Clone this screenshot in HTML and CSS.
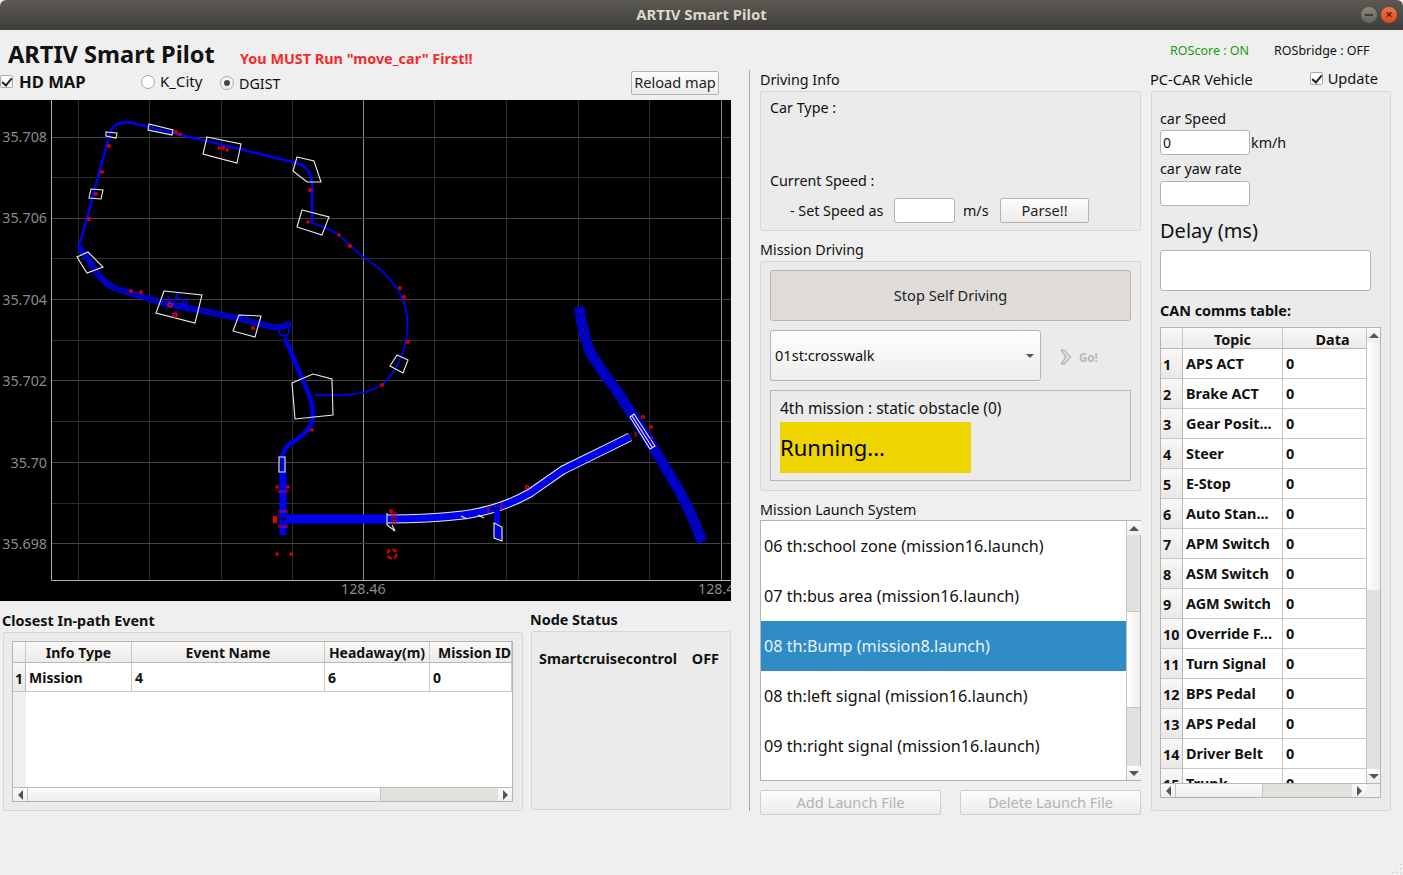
FILE: index.html
```html
<!DOCTYPE html>
<html lang="en">
<head>
  <meta charset="UTF-8">
  <meta name="viewport" content="width=device-width, initial-scale=1.0">
  <title>ARTIV Smart Pilot</title>
  <link rel="stylesheet" href="styles.css">
</head>
<body>
  <div class="titlebar">
    <span class="titlebar-text">ARTIV Smart Pilot</span>
    <div class="win-buttons">
      <span class="win-btn win-min"></span>
      <span class="win-btn win-close">&#215;</span>
    </div>
  </div>

  <div class="topbar">
    <h1>ARTIV Smart Pilot</h1>
    <span class="warning">You MUST Run "move_car" First!!</span>
    <span class="ros ros-core">ROScore : ON</span>
    <span class="ros ros-bridge">ROSbridge : OFF</span>
  </div>

  <div class="main">
    <div class="left">
      <div class="map-options">
        <span class="check checked"></span>
        <span class="hd-map">HD MAP</span>
        <span class="radio"></span>
        <span class="radio-label kcity">K_City</span>
        <span class="radio on"></span>
        <span class="radio-label dgist">DGIST</span>
        <button class="btn reload">Reload map</button>
      </div>

      <svg class="map" viewBox="0 100 731 501" width="731" height="501">
        <defs>
          <path id="east-road" d="M579 307 Q582 330 590 352 Q602 372 617 391 L647 437 L677 487 Q693 515 702 542"/>
          <path id="south-road" d="M79 247 Q85 255 97 273 Q105 285 117 289 L160 302 L237 318 L272 327 Q283 328 291 323"/>
          <path id="mid-road" d="M285 338 L310 397 Q315 410 311 425 Q305 435 290 444 Q282 450 282 460 L283 472"/>
        </defs>

        <rect class="map-bg" x="0" y="100" width="731" height="501"/>

        <g class="grid">
          <path d="M78.5 100V580 M149.5 100V580 M221.5 100V580 M292.5 100V580 M434.5 100V580 M506.5 100V580 M578.5 100V580 M649.5 100V580"/>
          <path d="M51 177.5H731 M51 258.5H731 M51 340.5H731 M51 421.5H731 M51 503.5H731"/>
        </g>
        <g class="grid-major">
          <path d="M363.5 100V580 M721.5 100V580"/>
          <path d="M51 137.5H731 M51 218.5H731 M51 299.5H731 M51 380.5H731 M51 462.5H731 M51 543.5H731"/>
        </g>
        <path class="axis" d="M51.5 100V580.5H731"/>

        <g class="axis-y">
          <text x="47" y="142">35.708</text>
          <text x="47" y="223">35.706</text>
          <text x="47" y="305">35.704</text>
          <text x="47" y="386">35.702</text>
          <text x="47" y="468">35.70</text>
          <text x="47" y="549">35.698</text>
        </g>
        <text class="axis-x" x="341" y="594">128.46</text>
        <text class="axis-x" x="698" y="594">128.4</text>

        <!-- road lines -->
        <path class="road r3" d="M79 247 L110 133 Q114 122 128 122 L293 162 Q312 166 312 185 L312 223"/>
        <path class="road r2" d="M312 223 Q325 226 339 235 L363 257 Q385 270 398 290 Q410 310 407 335 Q403 365 382 385 Q365 395 340 395 L315 395"/>
        <use href="#south-road" class="road w6"/>
        <use href="#south-road" class="road-dark w4"/>
        <use href="#south-road" class="road w3"/>
        <use href="#south-road" class="road-dark w1"/>
        <use href="#mid-road" class="road w5"/>
        <use href="#mid-road" class="road-dark w4"/>
        <use href="#mid-road" class="road w3"/>
        <use href="#east-road" class="road w11"/>
        <use href="#east-road" class="road-dark w9"/>
        <use href="#east-road" class="road w8"/>
        <use href="#east-road" class="road-dark w6"/>
        <use href="#east-road" class="road w5"/>
        <use href="#east-road" class="road-dark w3"/>
        <use href="#east-road" class="road w2"/>
        <circle class="road r2" cx="284" cy="331" r="5"/>
        <circle class="road r2" cx="178" cy="303" r="5"/>
        <path class="road r2" d="M168 296 Q172 304 166 310 M188 298 Q184 306 188 312 M176 298 L178 293 M176 310 L176 316"/>
        <path class="road r7" d="M283 472V535"/>
        <path class="road r9" d="M283 519H387"/>
        <path class="road-edge" d="M387 519 Q430 519 463 515 Q500 510 530 493 L563 470 L630 437"/>
        <path class="road r7" d="M387 519 Q430 519 463 515 Q500 510 530 493 L563 470 L630 437"/>
        <path class="road r6" d="M497 510V525"/>
        <path class="gap" d="M281 519H286 M392 519H396 M491 508H499"/>

        <!-- map zones -->
        <g class="zones">
          <polygon points="106,132 117,133 116,138 106,136"/>
          <polygon points="149,124 173,130 172,135 148,130"/>
          <polygon points="207,137 241,144 237,163 203,154"/>
          <polygon points="297,157 314,161 321,182 307,182 293,171"/>
          <polygon points="302,210 329,217 322,235 297,227"/>
          <polygon points="91,189 103,190 101,199 89,198"/>
          <polygon points="77,257 88,252 103,267 87,273"/>
          <polygon points="164,291 202,295 195,323 156,313"/>
          <polygon points="239,315 261,316 255,337 233,331"/>
          <polygon points="292,383 313,374 332,379 333,415 295,419"/>
          <polygon points="397,355 408,360 403,373 390,366"/>
          <polygon points="279,457 285,457 285,472 279,472"/>
          <polygon class="zone-fill" points="494,523 502,527 502,541 494,538"/>
          <polygon class="zone-fill" points="630,417 634,414 655,446 650,449"/>
          <path d="M632 416 L652 447"/>
          <polyline points="387,513 387,525 395,531 392,525"/>
          <path d="M461 516 L467 519 M478 515 L484 518"/>
        </g>

        <!-- event markers -->
        <g class="marks">
          <circle cx="109" cy="146" r="1.3"/><circle cx="102" cy="172" r="1.3"/>
          <circle cx="96" cy="194" r="1.3"/><circle cx="89" cy="219" r="1.3"/>
          <circle cx="176" cy="132" r="1.3"/><circle cx="180" cy="134" r="1"/>
          <circle cx="219" cy="148" r="1"/><circle cx="223" cy="148" r="1.3"/>
          <circle cx="227" cy="150" r="1"/><circle cx="310" cy="190" r="1.3"/>
          <circle cx="308" cy="222" r="1"/><circle cx="339" cy="235" r="1"/>
          <circle cx="350" cy="246" r="1.3"/><circle cx="400" cy="288" r="1.3"/>
          <circle cx="404" cy="297" r="1.3"/><circle cx="131" cy="291" r="1.3"/>
          <circle cx="141" cy="292" r="1.3"/><circle cx="170" cy="305" r="2"/>
          <circle cx="175" cy="315" r="2"/><circle cx="253" cy="328" r="1.3"/>
          <circle cx="408" cy="342" r="1.3"/><circle cx="382" cy="385" r="1.3"/>
          <circle cx="312" cy="430" r="1"/><circle cx="277" cy="487" r="1"/>
          <circle cx="288" cy="487" r="1"/><circle cx="277" cy="554" r="1"/>
          <circle cx="291" cy="554" r="1"/><circle cx="391" cy="511" r="1.3"/>
          <circle cx="527" cy="487" r="1.5"/><circle cx="643" cy="417" r="1.3"/>
          <circle cx="651" cy="427" r="1.3"/>
          <circle class="mark-ring" cx="392" cy="554" r="4.5"/>
          <rect class="mark-block" x="273" y="516" width="4" height="7"/>
          <path class="mark-tint" d="M278 490h10v3h-10z M278 510h10v3h-10z M278 525h10v3h-10z M391 512h6v12h-6z M487 506h3v7h-3z M500 503h3v7h-3z M634 432h3v5h-3z M650 436h3v4h-3z"/>
        </g>
      </svg>

      <div class="bottom-panels">
        <div class="closest">
          <div class="label-bold">Closest In-path Event</div>
          <div class="group closest-box">
            <div class="table-widget event-table">
              <div class="event-scroll">
                <table>
                  <thead>
                    <tr><th class="vh"></th><th class="ev-type">Info Type</th><th class="ev-name">Event Name</th><th class="ev-head">Headaway(m)</th><th class="ev-id">Mission ID</th></tr>
                  </thead>
                  <tbody>
                    <tr><td class="vh">1</td><td>Mission</td><td>4</td><td>6</td><td>0</td></tr>
                  </tbody>
                </table>
              </div>
              <div class="hbar">
                <span class="sb-btn"><i class="arr arr-left"></i></span>
                <span class="sb-thumb event-thumb"></span>
                <span class="sb-track"></span>
                <span class="sb-btn"><i class="arr arr-right"></i></span>
              </div>
            </div>
          </div>
        </div>
        <div class="node">
          <div class="label-bold">Node Status</div>
          <div class="group node-box">
            <span>Smartcruisecontrol</span>
            <span>OFF</span>
          </div>
        </div>
      </div>
    </div>

    <div class="mid">
      <div class="label">Driving Info</div>
      <div class="group info-box">
        <div class="car-type">Car Type :</div>
        <div class="cur-speed">Current Speed :</div>
        <div class="speed-row">
          <span class="set-speed">- Set Speed as</span>
          <input class="field speed-input" type="text">
          <span class="unit">m/s</span>
          <button class="btn parse">Parse!!</button>
        </div>
      </div>

      <div class="label">Mission Driving</div>
      <div class="group mission-box">
        <button class="btn stop">Stop Self Driving</button>
        <div class="combo-row">
          <div class="combo">01st:crosswalk<i class="arr arr-down combo-arrow"></i></div>
          <div class="go">
            <svg width="12" height="16" viewBox="0 0 12 16"><path d="M1 1 L4.5 1 L11 8 L4.5 15 L1 15 L5.5 8 Z" fill="#d8d8d8" stroke="#a8a8a8" stroke-width="1"/></svg>
            <span>Go!</span>
          </div>
        </div>
        <div class="status-box">
          <div class="status-text">4th mission : static obstacle (0)</div>
          <div class="running">Running...</div>
        </div>
      </div>

      <div class="label launch-label">Mission Launch System</div>
      <div class="launch-list">
        <ul>
          <li>06 th:school zone (mission16.launch)</li>
          <li>07 th:bus area (mission16.launch)</li>
          <li class="selected">08 th:Bump (mission8.launch)</li>
          <li>08 th:left signal (mission16.launch)</li>
          <li>09 th:right signal (mission16.launch)</li>
        </ul>
        <div class="vbar">
          <span class="sb-btn"><i class="arr arr-up"></i></span>
          <span class="sb-track launch-track-a"></span>
          <span class="sb-thumb launch-thumb"></span>
          <span class="sb-track"></span>
          <span class="sb-btn"><i class="arr arr-down"></i></span>
        </div>
      </div>
      <div class="launch-buttons">
        <button class="btn disabled">Add Launch File</button>
        <button class="btn disabled">Delete Launch File</button>
      </div>
    </div>

    <div class="right">
      <div class="right-head">
        <span>PC-CAR Vehicle</span>
        <span class="update"><span class="check checked"></span>Update</span>
      </div>
      <div class="group car-box">
        <div class="car-label">car Speed</div>
        <div class="speed-line">
          <input class="field car-input" type="text" value="0">
          <span>km/h</span>
        </div>
        <div class="car-label yaw-label">car yaw rate</div>
        <input class="field car-input" type="text">
        <div class="delay-label">Delay (ms)</div>
        <input class="field delay-input" type="text">
        <div class="can-label">CAN comms table:</div>

        <div class="table-widget can-table">
          <div class="can-top">
            <div class="can-scroll">
              <table>
                <thead>
                  <tr><th class="vh"></th><th class="can-topic">Topic</th><th class="can-data">Data</th></tr>
                </thead>
                <tbody>
                  <tr><td class="vh">1</td><td>APS ACT</td><td>0</td></tr>
                  <tr><td class="vh">2</td><td>Brake ACT</td><td>0</td></tr>
                  <tr><td class="vh">3</td><td>Gear Posit...</td><td>0</td></tr>
                  <tr><td class="vh">4</td><td>Steer</td><td>0</td></tr>
                  <tr><td class="vh">5</td><td>E-Stop</td><td>0</td></tr>
                  <tr><td class="vh">6</td><td>Auto Stan...</td><td>0</td></tr>
                  <tr><td class="vh">7</td><td>APM Switch</td><td>0</td></tr>
                  <tr><td class="vh">8</td><td>ASM Switch</td><td>0</td></tr>
                  <tr><td class="vh">9</td><td>AGM Switch</td><td>0</td></tr>
                  <tr><td class="vh">10</td><td>Override F...</td><td>0</td></tr>
                  <tr><td class="vh">11</td><td>Turn Signal</td><td>0</td></tr>
                  <tr><td class="vh">12</td><td>BPS Pedal</td><td>0</td></tr>
                  <tr><td class="vh">13</td><td>APS Pedal</td><td>0</td></tr>
                  <tr><td class="vh">14</td><td>Driver Belt</td><td>0</td></tr>
                  <tr><td class="vh">15</td><td>Trunk</td><td>0</td></tr>
                </tbody>
              </table>
            </div>
            <div class="vbar">
              <span class="sb-btn"><i class="arr arr-up"></i></span>
              <span class="sb-thumb can-vthumb"></span>
              <span class="sb-track"></span>
              <span class="sb-btn"><i class="arr arr-down"></i></span>
            </div>
          </div>
          <div class="hbar can-hbar">
            <span class="sb-btn"><i class="arr arr-left"></i></span>
            <span class="sb-thumb can-hthumb"></span>
            <span class="sb-track"></span>
            <span class="sb-btn"><i class="arr arr-right"></i></span>
            <span class="sb-corner"></span>
          </div>
        </div>
      </div>
    </div>
  </div>

  <svg class="grip" width="12" height="12" viewBox="0 0 12 12">
    <path d="M10 2h1v1h-1z M6 6h1v1H6z M10 6h1v1h-1z M2 10h1v1H2z M6 10h1v1H6z M10 10h1v1h-1z" fill="#c4c4c4"/>
  </svg>
</body>
</html>
```

FILE: styles.css
```css
* {
  box-sizing: border-box;
}
html, body {
  margin: 0;
  padding: 0;
}
body {
  position: relative;
  width: 1403px;
  height: 875px;
  overflow: hidden;
  background-color: #efefef;
  color: #111;
  font-family: "Noto Sans", "Open Sans", sans-serif;
  font-size: 14.3px;
}

/* window title */
.titlebar {
  display: flex;
  align-items: center;
  justify-content: center;
  position: relative;
  height: 30px;
  padding-bottom: 3px;
  background: linear-gradient(#5c5a52, #3e3d39);
  border-radius: 6px 6px 0 0;
}
.titlebar-text {
  color: #dcd8ce;
  font-weight: bold;
  font-size: 14.9px;
}
.win-buttons {
  position: absolute;
  right: 6px;
  top: 7px;
  display: flex;
  gap: 4px;
}
.win-btn {
  display: block;
  width: 16px;
  height: 16px;
  border-radius: 50%;
  text-align: center;
  line-height: 15px;
  font-size: 13px;
}
.win-min {
  background: linear-gradient(#8a8880, #66645d);
  position: relative;
}
.win-min::after {
  content: "";
  position: absolute;
  left: 4px;
  top: 7px;
  width: 8px;
  height: 2px;
  background-color: #3c3b37;
}
.win-close {
  background: linear-gradient(#f0774a, #d9481c);
  color: #5a2410;
  font-weight: bold;
}

/* header strip */
.topbar {
  display: flex;
  height: 40px;
}
h1 {
  margin: 8px 0 0 8px;
  width: 232px;
  font-size: 23.6px;
  line-height: 32px;
  font-weight: bold;
  color: #111;
  white-space: nowrap;
}
.warning {
  margin-top: 19px;
  line-height: 20px;
  width: 638px;
  color: #f52a2a;
  font-weight: bold;
  font-size: 14.4px;
}
.ros {
  margin-top: 13px;
  line-height: 16px;
  font-size: 12.5px;
}
.ros-core {
  margin-left: 292px;
  width: 104px;
  color: #1d9a0e;
}

/* columns */
.main {
  display: flex;
  height: 741px;
}
.left {
  width: 750px;
  border-right: 1px solid #a8a8a8;
}
.mid {
  width: 381px;
  margin-left: 10px;
}
.right {
  width: 240px;
  margin-left: 10px;
}

/* map options */
.map-options {
  display: flex;
  align-items: center;
  height: 30px;
  padding-bottom: 7px;
}
.check {
  display: inline-block;
  flex: none;
  position: relative;
  width: 13px;
  height: 13px;
  background-color: #fff;
  border: 1px solid #aaa;
  border-radius: 2px;
}
.checked::after {
  content: "";
  position: absolute;
  left: 3px;
  top: 0;
  width: 4px;
  height: 8px;
  border: solid #222;
  border-width: 0 2px 2px 0;
  transform: rotate(40deg);
}
.hd-map {
  margin-left: 6px;
  width: 122px;
  font-weight: bold;
  font-size: 16.6px;
}
.radio {
  display: inline-block;
  position: relative;
  width: 14px;
  height: 14px;
  border: 1px solid #aaa;
  border-radius: 50%;
  background-color: #fff;
}
.on {
  margin-top: 2px;
  background-color: #f4f4f4;
}
.on::after {
  content: "";
  position: absolute;
  left: 3px;
  top: 3px;
  width: 6px;
  height: 6px;
  border-radius: 50%;
  background-color: #444;
}
.radio-label {
  margin-left: 5px;
  width: 60px;
}
.kcity {
  margin-bottom: 1px;
  font-size: 15px;
}
.dgist {
  margin-top: 3px;
}
.btn {
  font-family: inherit;
  font-size: 14.6px;
  color: #222;
  background: linear-gradient(#fdfdfc, #ecebe9);
  border: 1px solid #b4b4b4;
  border-radius: 2px;
  padding: 0 0 2px;
}
.reload {
  margin-left: 332px;
  margin-top: 3px;
  width: 88px;
  height: 24px;
}

/* map */
.map {
  display: block;
}
.map-bg {
  fill: #000;
}
.grid path {
  fill: none;
  stroke: #2c2c2c;
  stroke-width: 1;
}
.grid-major path {
  fill: none;
  stroke: #444;
  stroke-width: 1;
}
.grid-major path:first-child {
  stroke: #8c8c8c;
}
.axis {
  fill: none;
  stroke: #b0b0b0;
  stroke-width: 1;
}
.axis-y text {
  text-anchor: end;
  fill: #8a8a8a;
  font-size: 14.3px;
}
.axis-x {
  fill: #8a8a8a;
  font-size: 14.3px;
}
.road, .road-dark, .road-edge {
  fill: none;
  stroke: #0000f0;
}
.road-dark {
  stroke: #000070;
}
.road-edge {
  stroke: #e8e8e8;
  stroke-width: 9;
}
.r2 { stroke-width: 1.8; }
.r3 { stroke-width: 2.6; }
.r6 { stroke-width: 6; }
.r7 { stroke-width: 7; }
.r9 { stroke-width: 9; }
.w1 { stroke-width: 1; }
.w2 { stroke-width: 1.6; }
.w3 { stroke-width: 3; }
.w4 { stroke-width: 4; }
.w5 { stroke-width: 5; }
.w6 { stroke-width: 6; }
.w8 { stroke-width: 8; }
.w9 { stroke-width: 9.4; }
.w11 { stroke-width: 10.6; }
.gap {
  fill: none;
  stroke: #000;
  stroke-width: 2;
}
.zones polygon, .zones polyline, .zones path {
  fill: none;
  stroke: #ececec;
  stroke-width: 1.1;
}
.zones .zone-fill {
  fill: #0000d8;
}
.marks circle {
  fill: none;
  stroke: #e60000;
  stroke-width: 1.5;
}
.marks .mark-ring {
  stroke-width: 2;
  stroke-dasharray: 5 2;
}
.mark-block {
  fill: #e60000;
}
.mark-tint {
  fill: #c00050;
  opacity: 0.55;
}

/* group boxes */
.group {
  background-color: #ebebeb;
  border: 1px solid #d6d6d6;
  border-radius: 2px;
}
.label {
  height: 21px;
  line-height: 20px;
}
.label-bold {
  height: 21px;
  line-height: 20px;
  font-weight: bold;
  font-size: 14.4px;
}

/* bottom of left column */
.bottom-panels {
  display: flex;
  height: 210px;
}
.closest {
  width: 520px;
  margin-left: 3px;
  padding-top: 10px;
}
.closest .label-bold {
  margin-left: -1px;
}
.closest-box {
  height: 179px;
  padding: 8px 9px 0 8px;
}
.node {
  width: 200px;
  margin-left: 8px;
  padding-top: 9px;
}
.node .label-bold {
  margin-left: -1px;
}
.node-box {
  height: 179px;
  display: flex;
  justify-content: space-between;
  padding: 17px 11px 0 7px;
  font-weight: bold;
  font-size: 14.4px;
  line-height: 20px;
}

/* tables */
.table-widget {
  background-color: #fff;
  border: 1px solid #b4b4b4;
  overflow: hidden;
}
table {
  border-collapse: separate;
  border-spacing: 0;
  table-layout: fixed;
  font-weight: bold;
  font-size: 14.4px;
}
th {
  height: 21px;
  padding: 0;
  font-weight: bold;
  background: linear-gradient(#f9f8f7, #ecebe9);
  border-right: 1px solid #c8c8c8;
  border-bottom: 1px solid #b8b8b8;
  text-align: center;
  white-space: nowrap;
  overflow: hidden;
}
td {
  height: 30px;
  padding: 0 3px;
  border-right: 1px solid #c8c8c8;
  border-bottom: 1px solid #c8c8c8;
  white-space: nowrap;
  overflow: hidden;
}
td.vh {
  padding: 2px 0 0 2px;
  text-align: left;
  background: linear-gradient(#f9f8f7, #e9e8e6);
  border-right-color: #b8b8b8;
}

.event-table {
  width: 501px;
  height: 161px;
  display: flex;
  flex-direction: column;
}
.event-scroll {
  flex: 1;
  overflow: hidden;
  background: linear-gradient(to right, #efefef 13px, #fff 13px);
}
.event-table table {
  width: 499px;
  font-size: 14px;
}
.event-table .vh { width: 13px; }
.ev-type { width: 106px; }
.ev-name { width: 193px; }
.ev-head { width: 105px; }
.ev-id {
  width: 82px;
  padding-left: 8px;
}
.event-table td {
  height: 29px;
}

.can-table {
  width: 221px;
  height: 471px;
  display: flex;
  flex-direction: column;
}
.can-top {
  display: flex;
  height: 455px;
}
.can-scroll {
  width: 205px;
  overflow: hidden;
}
.can-table table {
  width: 206px;
}
.can-table th {
  padding-top: 2px;
  line-height: 17px;
}
.can-table .vh { width: 22px; }
.can-topic { width: 100px; }
.can-table .can-data {
  width: auto;
  padding-left: 16px;
}

/* scroll bars */
.hbar {
  display: flex;
  height: 14px;
  flex: none;
  border-top: 1px solid #b8b8b8;
  background-color: #e2e1de;
}
.vbar {
  display: flex;
  flex-direction: column;
  width: 14px;
  flex: none;
  border-left: 1px solid #c4c4c4;
  background-color: #e2e1de;
}
.sb-btn {
  display: flex;
  align-items: center;
  justify-content: center;
  flex: none;
  width: 14px;
  height: 14px;
  background: linear-gradient(#fbfbfa, #eeedeb);
}
.sb-track {
  flex: 1;
  background-color: #e2e1de;
}
.sb-thumb {
  flex: none;
  background: linear-gradient(to right, #fff, #f0efed);
}
.sb-corner {
  width: 14px;
  background-color: #efefef;
}
.event-thumb {
  width: 354px;
  background: linear-gradient(#fbfbfa, #eeedeb);
  border-left: 1px solid #c4c4c4;
  border-right: 1px solid #c4c4c4;
}
.can-hthumb {
  width: 88px;
  background: linear-gradient(#fbfbfa, #eeedeb);
  border-left: 1px solid #c4c4c4;
  border-right: 1px solid #c4c4c4;
}
.can-vthumb {
  height: 248px;
}
.launch-track-a {
  flex: none;
  height: 76px;
}
.launch-thumb {
  height: 97px;
  border-top: 1px solid #c4c4c4;
  border-bottom: 1px solid #c4c4c4;
}
.arr {
  display: block;
  width: 0;
  height: 0;
  border-style: solid;
  border-color: transparent;
}
.arr-up { border-width: 0 5px 5px; border-bottom-color: #555; }
.arr-down { border-width: 5px 5px 0; border-top-color: #555; }
.arr-left { border-width: 5px 5px 5px 0; border-right-color: #555; }
.arr-right { border-width: 5px 0 5px 5px; border-left-color: #555; }

/* driving info */
.field {
  display: block;
  font-family: inherit;
  font-size: 14px;
  color: #111;
  background-color: #fff;
  border: 1px solid #b4b4b4;
  border-radius: 3px;
  padding: 0 2px;
  outline: none;
}
.info-box {
  height: 140px;
  padding: 6px 9px 0;
  line-height: 20px;
}
.cur-speed {
  margin-top: 53px;
}
.speed-row {
  display: flex;
  align-items: center;
  margin-top: 7px;
  height: 25px;
}
.set-speed {
  margin-left: 20px;
  width: 104px;
  white-space: nowrap;
}
.speed-input {
  width: 61px;
  height: 25px;
}
.unit {
  width: 37px;
  margin-left: 8px;
}
.parse {
  width: 89px;
  height: 25px;
}
.info-box + .label {
  margin-top: 9px;
}
.mission-box {
  height: 230px;
  padding: 8px 9px 0;
}
.stop {
  display: block;
  width: 361px;
  height: 51px;
  background: #dedbd8;
  border-radius: 3px;
}
.combo-row {
  display: flex;
  margin-top: 9px;
}
.combo {
  position: relative;
  width: 271px;
  height: 51px;
  padding-left: 4px;
  font-size: 14.6px;
  line-height: 49px;
  background: linear-gradient(#fdfdfc, #efeeec);
  border: 1px solid #b4b4b4;
  border-radius: 3px;
}
.combo-arrow {
  position: absolute;
  right: 6px;
  top: 23px;
  border-width: 4px 4px 0;
}
.go {
  display: flex;
  align-items: center;
  margin-left: 19px;
  padding-top: 3px;
  color: #b8b8b8;
  font-weight: bold;
  font-size: 11.5px;
}
.go span {
  margin-left: 7px;
}
.status-box {
  margin-top: 9px;
  height: 91px;
  border: 1px solid #b8b8b8;
  padding: 6px 9px 0;
}
.status-text {
  font-size: 15.45px;
  line-height: 22px;
  white-space: nowrap;
}
.running {
  margin-top: 3px;
  width: 191px;
  height: 51px;
  background-color: #eed500;
  color: #000;
  font-size: 22px;
  line-height: 51px;
}
.launch-label {
  margin-top: 9px;
  height: 20px;
}
.launch-list {
  display: flex;
  height: 261px;
  background-color: #fff;
  border: 1px solid #b4b4b4;
}
ul {
  flex: 1;
  margin: 0;
  padding: 0;
  list-style: none;
}
li {
  height: 50px;
  padding-left: 3px;
  line-height: 50px;
  font-size: 16.2px;
  white-space: nowrap;
}
.selected {
  background-color: #308cc6;
  color: #e8f2f8;
}
.launch-buttons {
  display: flex;
  justify-content: space-between;
  margin-top: 9px;
}
.disabled {
  width: 181px;
  height: 25px;
  color: #b4b4b4;
  border-color: #cfcfcf;
}

/* pc-car panel */
.right-head {
  display: flex;
  justify-content: space-between;
  height: 21px;
  line-height: 18px;
  margin-left: -1px;
  padding-right: 13px;
  font-size: 14.6px;
}
.update {
  display: flex;
  align-items: center;
  gap: 5px;
  height: 16px;
}
.car-box {
  height: 720px;
  padding: 17px 9px 0 8px;
  line-height: 20px;
}
.car-label {
  height: 20px;
}
.speed-line {
  display: flex;
  align-items: center;
  gap: 1px;
  margin-top: 1px;
}
.car-input {
  width: 90px;
  height: 25px;
}
.yaw-label {
  margin-top: 4px;
  margin-bottom: 2px;
}
.delay-label {
  margin-top: 11px;
  font-size: 20px;
  line-height: 28px;
}
.delay-input {
  width: 211px;
  height: 41px;
  margin-top: 5px;
}
.can-label {
  margin-top: 10px;
  height: 26px;
  font-weight: bold;
  font-size: 14.4px;
}

.grip {
  position: absolute;
  right: 1px;
  bottom: 1px;
}
```
